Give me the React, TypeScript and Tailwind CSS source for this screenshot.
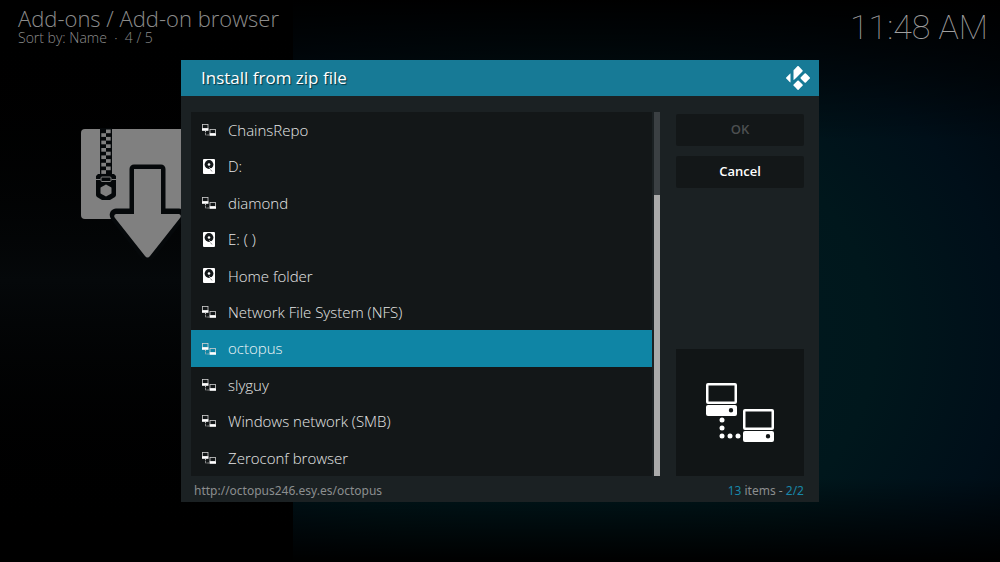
import { SiKodi } from "react-icons/si";

type Source = {
  label: string;
  kind: "network" | "drive";
};

const sources: Source[] = [
  { label: "ChainsRepo", kind: "network" },
  { label: "D:", kind: "drive" },
  { label: "diamond", kind: "network" },
  { label: "E: ( )", kind: "drive" },
  { label: "Home folder", kind: "drive" },
  { label: "Network File System (NFS)", kind: "network" },
  { label: "octopus", kind: "network" },
  { label: "slyguy", kind: "network" },
  { label: "Windows network (SMB)", kind: "network" },
  { label: "Zeroconf browser", kind: "network" },
];

const selected = "octopus";

function NetworkIcon({ className }: { className?: string }) {
  return (
    <svg viewBox="0 0 68 59" className={className} fill="#fff" aria-hidden="true">
      <path
        fillRule="evenodd"
        d="M2 0h27a2 2 0 0 1 2 2v17a2 2 0 0 1-2 2H2a2 2 0 0 1-2-2V2a2 2 0 0 1 2-2zm.5 2.500v16h26v-16zM2 22h27a2 2 0 0 1 2 2v7a2 2 0 0 1-2 2H2a2 2 0 0 1-2-2v-7a2 2 0 0 1 2-2zm23 3a2.200 2.200 0 1 0 0 4.400a2.200 2.200 0 0 0 0-4.400z"
      />
      <path
        fillRule="evenodd"
        d="M39 26h27a2 2 0 0 1 2 2v17a2 2 0 0 1-2 2H39a2 2 0 0 1-2-2V28a2 2 0 0 1 2-2zm.5 2.500v16h26v-16zM39 48h27a2 2 0 0 1 2 2v7a2 2 0 0 1-2 2H39a2 2 0 0 1-2-2v-7a2 2 0 0 1 2-2zm23 3a2.200 2.200 0 1 0 0 4.400a2.200 2.200 0 0 0 0-4.400z"
      />
      <circle cx="16" cy="37" r="2.500" />
      <circle cx="16" cy="45" r="2.500" />
      <circle cx="16" cy="53" r="2.500" />
      <circle cx="24" cy="53" r="2.500" />
      <circle cx="32" cy="53" r="2.500" />
    </svg>
  );
}

// Simplified version of the network icon, readable at row size.
function NetworkSmallIcon() {
  return (
    <svg viewBox="0 0 14 12" className="h-3 w-3.5" fill="none" aria-hidden="true">
      <rect x="0.500" y="0.500" width="5.500" height="4" stroke="#d0d0d0" strokeWidth="0.800" />
      <rect x="0" y="4.300" width="6.500" height="2.500" fill="#fff" />
      <rect x="8" y="5.500" width="5.500" height="4" stroke="#d0d0d0" strokeWidth="0.800" />
      <rect x="7.500" y="9.300" width="6.500" height="2.500" fill="#fff" />
      <path d="M3.500 7v4H7" stroke="#bbb" strokeWidth="1" strokeDasharray="1 0.700" />
    </svg>
  );
}

function DriveIcon() {
  return (
    <svg viewBox="0 0 12 15" className="h-[15px] w-3" aria-hidden="true">
      <rect width="12" height="15" rx="1" fill="#fff" />
      <circle cx="6" cy="5.500" r="4.400" fill="#14181a" />
      <circle cx="6" cy="5.500" r="1.300" fill="#fff" />
      <path d="M6.500 8.500l3 3.500" stroke="#fff" strokeWidth="1" />
      <path d="M7.500 10.500l1.500 2" stroke="#666" strokeWidth="0.800" />
    </svg>
  );
}

function ZipIcon() {
  const teeth = Array.from({ length: 12 }, (_, i) => i);
  return (
    <svg viewBox="0 0 120 132" className="h-[132px] w-[120px]" aria-hidden="true">
      <rect x="1" y="1" width="116" height="90" rx="4" fill="#808080" />
      <rect x="20" y="0" width="12" height="48" fill="#05080a" />
      {teeth.map((i) => (
        <rect
          key={i}
          x={i % 2 ? 21.3 : 26}
          y={1.5 + i * 3.7}
          width="4.700"
          height="3.700"
          fill="#808080"
        />
      ))}
      <path d="M18 46h16l2 2v19q0 1-1 2l-5 3h-8l-5-3q-1-1-1-2V48z" fill="#05080a" />
      <path d="M16 51.500h4.500M31.500 51.500H36" stroke="#808080" />
      <rect x="21" y="49" width="10" height="4.500" rx="1" fill="none" stroke="#808080" />
      <path d="M26 57.500l4.500 2.500v5l-4.500 2.500-4.500-2.500v-5z" fill="#808080" stroke="#808080" strokeWidth="2" strokeLinejoin="round" />
      <path
        d="M54 41h27v44h18q3 1 1 4L70 128q-2.500 3-5 0L35 89q-2-3 1-4h18z"
        fill="none"
        stroke="#05080a"
        strokeWidth="9"
        strokeLinejoin="round"
      />
      <path d="M54 41h27v45h18q3 1 1 4L70 128q-2.500 3-5 0L35 90q-2-3 1-4h18z" fill="#808080" />
    </svg>
  );
}

function SourceRow({ label, kind }: Source) {
  const active = label === selected;
  return (
    <li className="flex flex-1">
      <button
        type="button"
        aria-current={active}
        className={
          active
            ? "flex flex-1 items-center gap-3 bg-[#0f85a5] px-2.5 text-left text-[15px] text-[#eef5f7]"
            : "flex flex-1 items-center gap-3 px-2.5 text-left text-[15px] text-[#e6e7e7]"
        }
      >
        <span className="flex w-[15px] justify-center">
          {kind === "drive" ? <DriveIcon /> : <NetworkSmallIcon />}
        </span>
        {label}
      </button>
    </li>
  );
}

function InstallDialog() {
  return (
    <section
      role="dialog"
      aria-labelledby="dialog-title"
      className="w-full max-w-[638px] bg-[#1b2123]"
    >
      <header className="flex h-9 items-center justify-between bg-[#177a96] pr-[9px] pl-5">
        <h2
          id="dialog-title"
          className="text-[17px] font-medium text-white [text-shadow:1px_1px_1px_#0a3440]"
        >
          Install from zip file
        </h2>
        <SiKodi className="size-6 text-white" aria-hidden="true" />
      </header>

      <div className="flex pt-4 pr-[15px] pl-2.5">
        <ul className="flex h-[364px] flex-1 flex-col bg-[#131718] font-light">
          {sources.map((source) => (
            <SourceRow key={source.label} {...source} />
          ))}
        </ul>

        <div className="ml-0.5 flex w-1.5 flex-col bg-[#3b4043] pt-[83px]">
          <div className="flex-1 bg-[#aaaaaa]" />
        </div>

        <div className="ml-4 flex w-32 flex-col pt-0.5">
          <button
            type="button"
            disabled
            className="h-8 rounded-xs bg-[#131718] text-[13px] font-semibold text-[#4c4f50]"
          >
            OK
          </button>
          <button
            type="button"
            className="mt-2.5 h-8 rounded-xs bg-[#131718] text-[13px] font-semibold text-white"
          >
            Cancel
          </button>
          <div className="mt-auto flex h-[127px] items-center justify-center bg-[#111516]">
            <NetworkIcon className="h-[59px] w-[68px]" />
          </div>
        </div>
      </div>

      <footer className="flex h-[26px] items-center justify-between pt-1 pr-[15px] pl-[13px] font-['Noto_Sans',sans-serif] text-xs text-[#8b8e8f]">
        <span>http://octopus246.esy.es/octopus</span>
        <span>
          <span className="text-[#1887a8]">13</span> items - <span className="text-[#1887a8]">2/2</span>
        </span>
      </footer>
    </section>
  );
}

export default function App() {
  return (
    <div className="relative flex min-h-screen bg-black font-['Open_Sans','Noto_Sans',sans-serif]">
      <aside className="w-[293px] shrink-0 bg-linear-to-b from-black via-[#05080a] to-black pl-[18px] font-light text-[#8c8c8c]">
        <h1 className="pt-1.5 text-[22px] leading-6 whitespace-nowrap">Add-ons / Add-on browser</h1>
        <p className="text-sm leading-4">Sort by: Name &nbsp;·&nbsp; 4 / 5</p>
        <div className="pt-[82px] pl-[62px]">
          <ZipIcon />
        </div>
      </aside>

      <main className="flex-1 bg-[radial-gradient(ellipse_at_40%_60%,#001c22_0%,#00171c_50%,#000f19_72%,#00050b_100%)]">
        <div className="flex h-full items-start justify-end bg-[linear-gradient(to_bottom,#000_0%,transparent_25%,transparent_85%,#000_100%)] pt-[5px] pr-3">
          <time className="font-['Roboto',sans-serif] text-[34px] leading-11 font-thin text-[#a0a0a0]">
            11:48 AM
          </time>
        </div>
      </main>

      <div className="absolute inset-0 flex items-start justify-center pt-[60px]">
        <InstallDialog />
      </div>
    </div>
  );
}
